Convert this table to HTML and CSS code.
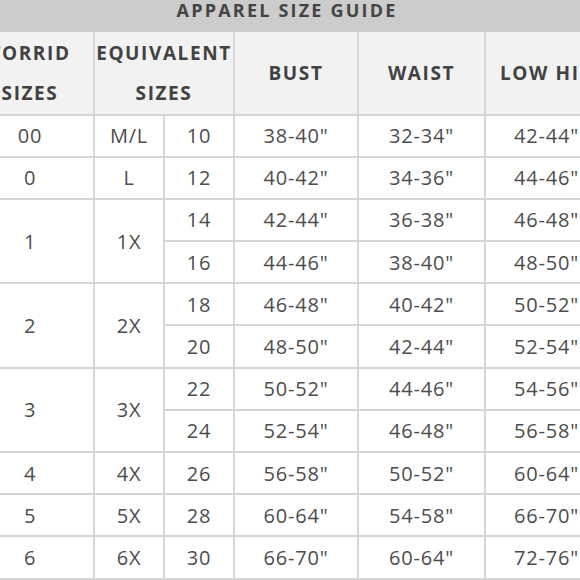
FILE: index.html
```html
<!DOCTYPE html>
<html lang="en">
<head>
<meta charset="utf-8">
<title>Apparel Size Guide</title>
<link rel="stylesheet" href="styles.css">
</head>
<body>
<div class="viewport">
<table class="guide">
  <colgroup>
    <col class="c-torrid">
    <col class="c-eq1">
    <col class="c-eq2">
    <col class="c-bust">
    <col class="c-waist">
    <col class="c-hip">
  </colgroup>
  <thead>
    <tr class="title-row"><th colspan="6">APPAREL SIZE GUIDE</th></tr>
    <tr class="head-row">
      <th>TORRID<br>SIZES</th>
      <th colspan="2">EQUIVALENT<br>SIZES</th>
      <th>BUST</th>
      <th>WAIST</th>
      <th>LOW HIP</th>
    </tr>
  </thead>
  <tbody>
    <tr><td>00</td><td>M/L</td><td>10</td><td>38-40"</td><td>32-34"</td><td>42-44"</td></tr>
    <tr><td>0</td><td>L</td><td>12</td><td>40-42"</td><td>34-36"</td><td>44-46"</td></tr>
    <tr><td rowspan="2">1</td><td rowspan="2">1X</td><td>14</td><td>42-44"</td><td>36-38"</td><td>46-48"</td></tr>
    <tr><td>16</td><td>44-46"</td><td>38-40"</td><td>48-50"</td></tr>
    <tr><td rowspan="2">2</td><td rowspan="2">2X</td><td>18</td><td>46-48"</td><td>40-42"</td><td>50-52"</td></tr>
    <tr><td>20</td><td>48-50"</td><td>42-44"</td><td>52-54"</td></tr>
    <tr><td rowspan="2">3</td><td rowspan="2">3X</td><td>22</td><td>50-52"</td><td>44-46"</td><td>54-56"</td></tr>
    <tr><td>24</td><td>52-54"</td><td>46-48"</td><td>56-58"</td></tr>
    <tr><td>4</td><td>4X</td><td>26</td><td>56-58"</td><td>50-52"</td><td>60-64"</td></tr>
    <tr><td>5</td><td>5X</td><td>28</td><td>60-64"</td><td>54-58"</td><td>66-70"</td></tr>
    <tr><td>6</td><td>6X</td><td>30</td><td>66-70"</td><td>60-64"</td><td>72-76"</td></tr>
  </tbody>
</table>
</div>
</body>
</html>
```
FILE: styles.css
```css
html, body {
  margin: 0;
  padding: 0;
  background: #ffffff;
}

.viewport {
  width: 580px;
  height: 580px;
  overflow: hidden;
}

.guide {
  margin-left: -35px;
  margin-top: -13px;
  width: 642px;
  table-layout: fixed;
  border-collapse: collapse;
  font-family: "Open Sans", "Liberation Sans", sans-serif;
  color: #474747;
}

.c-torrid { width: 128px; }
.c-eq1 { width: 70px; }
.c-eq2 { width: 70px; }
.c-bust { width: 124px; }
.c-waist { width: 127px; }
.c-hip { width: 123px; }

.guide th,
.guide td {
  border: 2px solid #d6d6d6;
  text-align: center;
  vertical-align: middle;
  padding: 0;
}

.title-row th {
  height: 45px;
  background: #cccccc;
  border: none;
  font-size: 18px;
  font-weight: 700;
  letter-spacing: 2.2px;
  color: #444444;
}

.head-row th {
  height: 81.5px;
  background: #f2f2f2;
  font-size: 19px;
  font-weight: 700;
  letter-spacing: 1.6px;
  line-height: 40px;
  color: #424242;
  border-top: none;
}

.guide td {
  height: 40.2px;
  font-size: 20px;
  font-weight: 400;
  letter-spacing: 0.8px;
  color: #4d4d4d;
}
```
